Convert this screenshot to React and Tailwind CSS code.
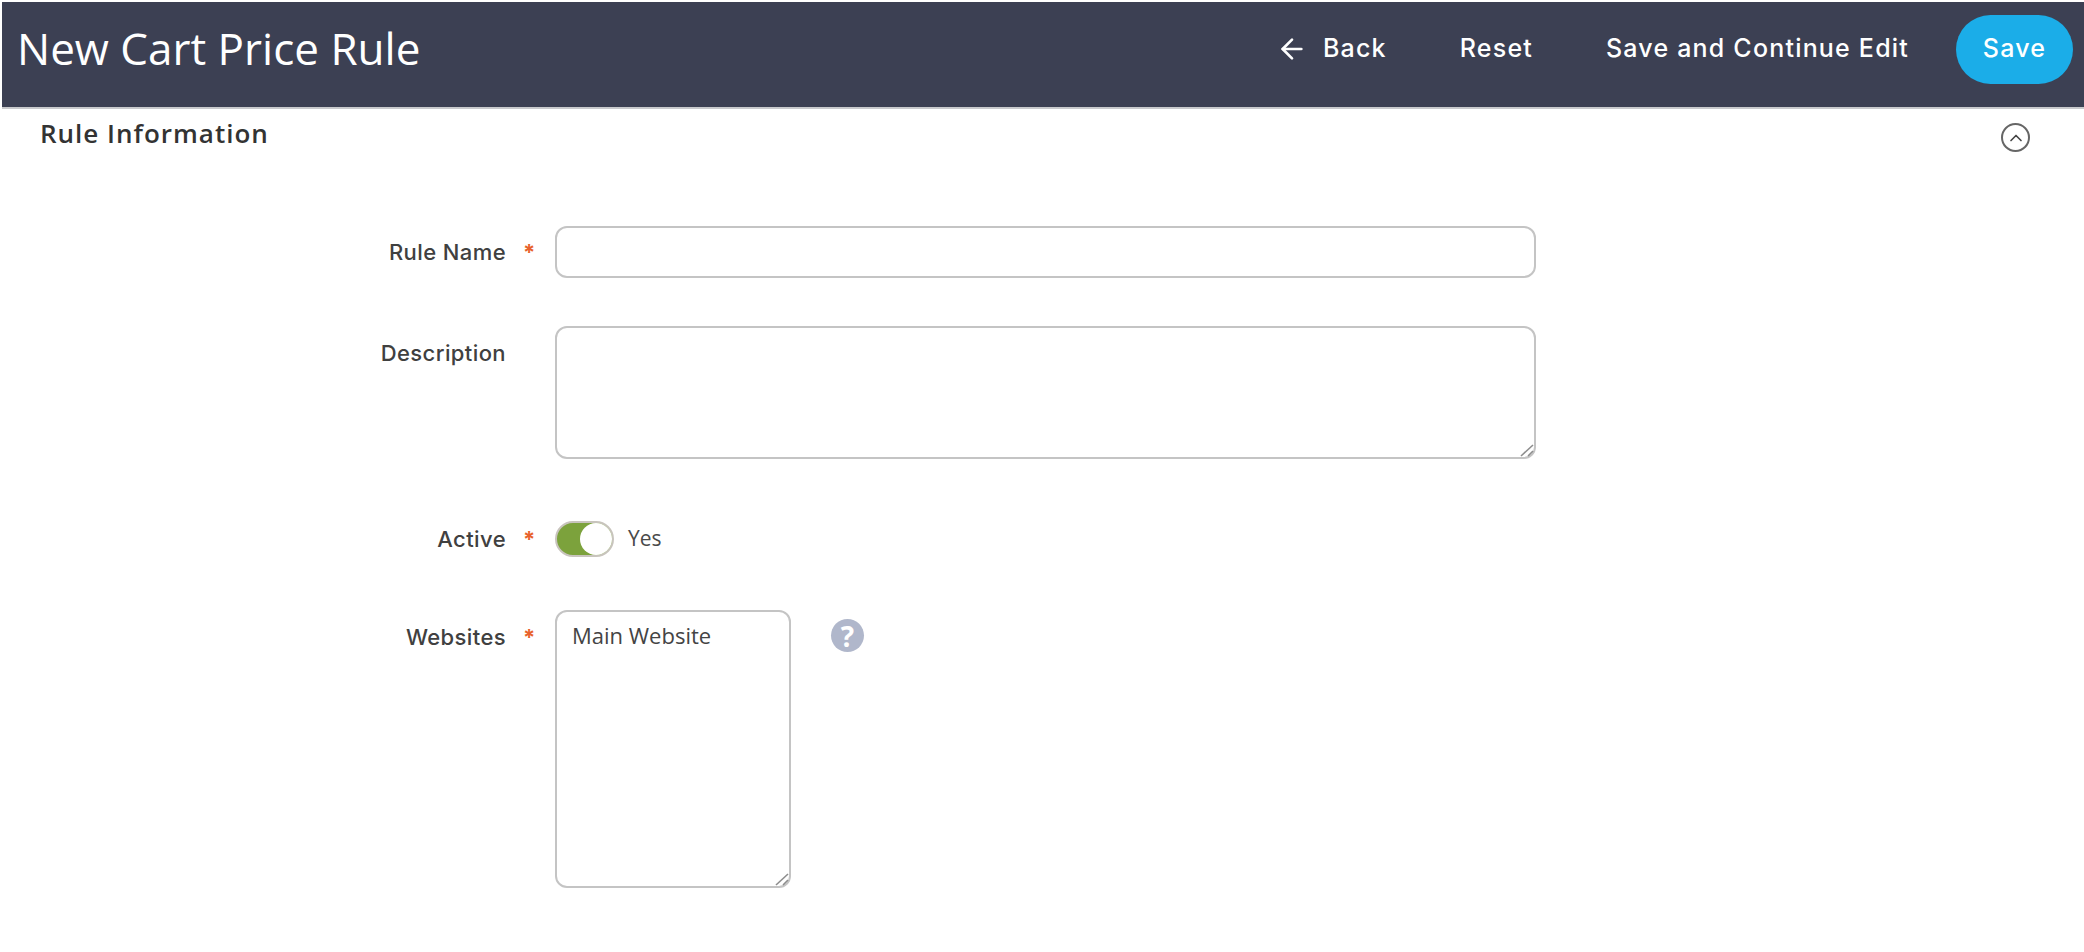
import React from "react";
import { ArrowLeft, ChevronUp } from "lucide-react";

function Label({ text, required }) {
  return (
    <div className="flex w-[555px] shrink-0 font-['Inter',sans-serif] text-[22px] font-medium tracking-[0.4px] text-[#404040]">
      <span className="w-[506px] text-right">{text}</span>
      {required && <span className="ml-[17px] font-bold text-[#e8622c]">*</span>}
    </div>
  );
}

function ResizeGrip() {
  return (
    <svg className="absolute bottom-[2px] right-[2px] h-[14px] w-[14px] text-[#8d8d8d]" viewBox="0 0 14 14" fill="none" stroke="currentColor" strokeWidth="1.6">
      <path d="M1 13 13 2" />
      <path d="M8 13 13 8" />
    </svg>
  );
}

export default function App() {
  return (
    <div className="h-[952px] w-full overflow-hidden bg-white pl-[2px] pt-[2px] font-['Open_Sans',sans-serif]">
      <header className="flex h-[107px] items-center justify-between border-b-2 border-[#c9cacd] bg-[#3c4053] pb-[11px] pl-[15px] pr-[11px] text-white">
        <h1 className="mb-[3px] text-[44px] font-normal">New Cart Price Rule</h1>
        <div className="flex items-center font-['Inter',sans-serif] text-[25px] font-medium tracking-[1.2px]">
          <button className="flex items-center gap-[15px]">
            <ArrowLeft className="h-[32px] w-[32px]" />
            Back
          </button>
          <button className="ml-[73px]">Reset</button>
          <button className="ml-[73px]">Save and Continue Edit</button>
          <button className="ml-[47px] h-[69px] w-[117px] rounded-full bg-[#1bade8]">Save</button>
        </div>
      </header>

      <section className="flex items-start justify-between pl-[38px] pr-[54px] pt-[5px]">
        <h2 className="text-[26px] font-semibold tracking-[1px] text-[#333]">Rule Information</h2>
        <span className="mt-[9px] flex h-[29px] w-[29px] items-center justify-center rounded-full border-2 border-[#666]">
          <ChevronUp className="h-[20px] w-[20px] text-[#444]" />
        </span>
      </section>

      <form className="-ml-[2px] mt-[73px] flex flex-col">
        <div className="flex items-center">
          <Label text="Rule Name" required />
          <input className="h-[52px] w-[981px] rounded-[12px] border-2 border-[#c4c4c4] bg-white px-4 outline-none" />
        </div>

        <div className="mt-[48px] flex items-start">
          <div className="pt-[11px]"><Label text="Description" /></div>
          <div className="relative h-[133px] w-[981px]">
            <textarea className="block h-full w-full resize-none rounded-[12px] border-2 border-[#c4c4c4] bg-white px-4 outline-none" />
            <ResizeGrip />
          </div>
        </div>

        <div className="mt-[62px] flex items-center">
          <Label text="Active" required />
          <span className="relative h-[36px] w-[59px] rounded-full border-2 border-[#c8c4bd] bg-[#7ca23c]">
            <span className="absolute right-0 top-0 h-[32px] w-[32px] rounded-full bg-white" />
          </span>
          <span className="ml-[14px] text-[21px] text-[#4a4a4a]">Yes</span>
        </div>

        <div className="mt-[53px] flex items-start">
          <div className="pt-[11px]"><Label text="Websites" required /></div>
          <div className="relative h-[278px] w-[236px]">
            <textarea
              readOnly
              defaultValue="Main Website"
              className="block h-full w-full resize-none rounded-[12px] border-2 border-[#c4c4c4] bg-white px-[15px] py-[7px] text-[22px] text-[#444] outline-none"
            />
            <ResizeGrip />
          </div>
          <span className="ml-[40px] mt-[9px] flex h-[33px] w-[33px] items-center justify-center rounded-full bg-[#b0b7cb] text-[28px] font-bold text-white">?</span>
        </div>
      </form>
    </div>
  );
}
